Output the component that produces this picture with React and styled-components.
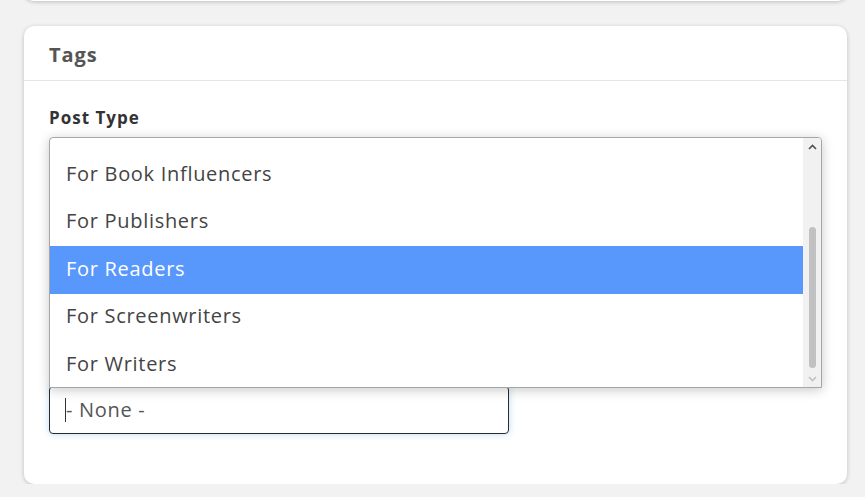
import React from "react";
import styled, { createGlobalStyle } from "styled-components";

const GlobalStyle = createGlobalStyle`
  html, body {
    margin: 0;
    background: #f2f2f2;
  }
  body {
    font-family: "Open Sans", "Liberation Sans", sans-serif;
    overflow: hidden;
  }
`;

const Page = styled.div`
  display: flex;
  flex-direction: column;
  gap: 25px;
  padding: 0 18px 0 24px;
`;

const Card = styled.section`
  background: #fff;
  border-radius: 10px;
  box-shadow: 0 1px 4px rgba(0, 0, 0, 0.22);
`;

const PrevCard = styled(Card)`
  height: 20px;
  margin-top: -19px;
`;

const CardHeader = styled.header`
  height: 55px;
  display: flex;
  align-items: center;
  padding: 3px 25px 0;
  box-sizing: border-box;
  border-bottom: 1px solid #e5e5e5;
  font-size: 20px;
  font-weight: 700;
  letter-spacing: 0.9px;
  color: #555;
`;

const CardBody = styled.div`
  padding: 25px 25px 50px;
`;

const Label = styled.label`
  display: block;
  font-size: 17px;
  font-weight: 700;
  letter-spacing: 1px;
  color: #333;
  margin-bottom: 8px;
`;

const Listbox = styled.div`
  position: relative;
  z-index: 2;
  height: 249px;
  display: flex;
  background: #fff;
  border: 1px solid #a6a6a6;
  border-radius: 4px 4px 0 0;
  box-shadow: 0 2px 12px rgba(0, 0, 0, 0.22);
  overflow: hidden;
`;

const Options = styled.ul`
  flex: 1;
  list-style: none;
  margin: 0;
  padding: 13px 0 0;
`;

const Option = styled.li`
  height: 47.5px;
  box-sizing: border-box;
  display: flex;
  align-items: center;
  padding: 0 16px 3px;
  font-size: 20px;
  letter-spacing: 0.7px;
  color: ${(p) => (p.$active ? "#fff" : "#444")};
  background: ${(p) => (p.$active ? "#5897fb" : "transparent")};
`;

const Scrollbar = styled.div`
  width: 18px;
  display: flex;
  flex-direction: column;
  background: #f1f1f1;
`;

const Arrow = styled.div`
  height: 17px;
  display: flex;
  align-items: center;
  justify-content: center;
  color: ${(p) => (p.$dim ? "#c1c1c1" : "#505050")};
`;

const Track = styled.div`
  flex: 1;
  display: flex;
  flex-direction: column;
  justify-content: flex-end;
  align-items: center;
  padding-bottom: 2px;
`;

const Thumb = styled.div`
  width: 7px;
  height: 141px;
  border-radius: 4px;
  background: #c1c1c1;
`;

const Field = styled.div`
  position: relative;
  z-index: 1;
  width: 460px;
  height: 48px;
  margin-top: -2px;
  box-sizing: border-box;
  display: flex;
  align-items: center;
  padding: 0 0 2px 15px;
  border: 1px solid #2b2b2b;
  border-radius: 4px;
  box-shadow: 0 0 7px rgba(102, 175, 233, 0.45);
  font-size: 20px;
  letter-spacing: 0.7px;
  color: #555;
`;

const Caret = styled.span`
  width: 1px;
  height: 24px;
  margin-top: 2px;
  background: #333;
`;

const options = [
  "For Book Influencers",
  "For Publishers",
  "For Readers",
  "For Screenwriters",
  "For Writers",
];

const Chevron = ({ up }) => (
  <svg width="9" height="6" viewBox="0 0 9 6">
    <path
      d={up ? "M1 5 L4.5 1.5 L8 5" : "M1 1 L4.5 4.5 L8 1"}
      fill="none"
      stroke="currentColor"
      strokeWidth="1.6"
    />
  </svg>
);

export default function App() {
  return (
    <>
      <GlobalStyle />
      <Page>
        <PrevCard />
        <Card>
          <CardHeader>Tags</CardHeader>
          <CardBody>
            <Label>Post Type</Label>
            <Listbox>
              <Options>
                {options.map((o) => (
                  <Option key={o} $active={o === "For Readers"}>
                    {o}
                  </Option>
                ))}
              </Options>
              <Scrollbar>
                <Arrow>
                  <Chevron up />
                </Arrow>
                <Track>
                  <Thumb />
                </Track>
                <Arrow $dim>
                  <Chevron />
                </Arrow>
              </Scrollbar>
            </Listbox>
            <Field>
              <Caret />
              - None -
            </Field>
          </CardBody>
        </Card>
      </Page>
    </>
  );
}
